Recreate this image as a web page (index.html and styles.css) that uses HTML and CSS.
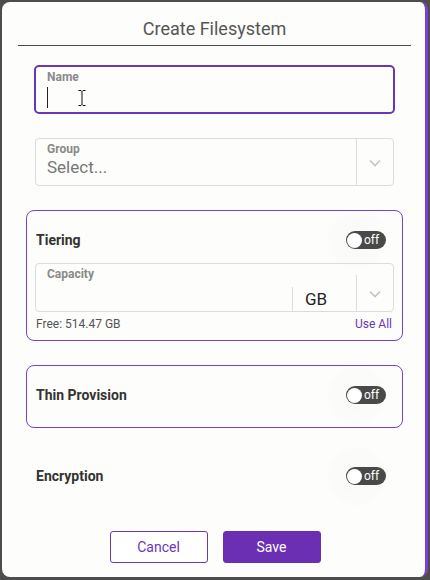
FILE: index.html
```html
<!DOCTYPE html>
<html lang="en">
<head>
<meta charset="utf-8">
<title>Create Filesystem</title>
<link rel="stylesheet" href="styles.css">
</head>
<body>
<div class="dialog">
  <div class="header"><h1 class="title">Create Filesystem</h1></div>

  <div class="form">
    <div class="field field-active">
      <span class="label">Name</span>
      <div class="value-line">
        <span class="caret"></span>
        <svg class="ibeam" width="8" height="16" viewBox="0 0 8 16"><path d="M0.5 0.5h2.5l1 1 1-1h2.5M4 1.5v13M0.5 15.5h2.5l1-1 1 1h2.5" fill="none" stroke="#111" stroke-width="1"/></svg>
      </div>
    </div>

    <div class="select">
      <div class="select-main">
        <span class="label">Group</span>
        <span class="placeholder">Select...</span>
      </div>
      <div class="select-arrow full">
        <svg width="12" height="8" viewBox="0 0 12 8"><path d="M1 1.5l5 5 5-5" fill="none" stroke="#c4c4c4" stroke-width="1.6"/></svg>
      </div>
    </div>

    <div class="card card-tiering">
      <div class="row">
        <span class="row-label">Tiering</span>
        <span class="toggle"><span class="knob"></span><span class="toggle-text">off</span></span>
      </div>
      <div class="select capacity">
        <div class="select-main">
          <span class="label">Capacity</span>
        </div>
        <div class="unit">GB</div>
        <div class="select-arrow partial">
          <svg width="12" height="8" viewBox="0 0 12 8"><path d="M1 1.5l5 5 5-5" fill="none" stroke="#c4c4c4" stroke-width="1.6"/></svg>
        </div>
      </div>
      <div class="free-row">
        <span class="free">Free: 514.47 GB</span>
        <span class="use-all">Use All</span>
      </div>
    </div>

    <div class="card card-thin">
      <div class="row">
        <span class="row-label">Thin Provision</span>
        <span class="toggle"><span class="knob"></span><span class="toggle-text">off</span></span>
      </div>
    </div>

    <div class="plain-row">
      <div class="row">
        <span class="row-label">Encryption</span>
        <span class="toggle"><span class="knob"></span><span class="toggle-text">off</span></span>
      </div>
    </div>
  </div>

  <div class="actions">
    <button class="btn btn-cancel">Cancel</button>
    <button class="btn btn-save">Save</button>
  </div>
</div>
</body>
</html>
```

FILE: styles.css
```css
* { box-sizing: border-box; }

html, body {
  margin: 0;
  padding: 0;
  background: #4d4d4d;
  width: 430px;
  height: 580px;
  overflow: hidden;
}

body {
  font-family: "Roboto", "Liberation Sans", sans-serif;
  padding: 2px 2px 3px 2px;
}

.dialog {
  width: 426px;
  height: 575px;
  background: #fdfdfb;
  border-radius: 8px;
  border-right: 3px solid #7a3fd4;
  display: flex;
  flex-direction: column;
  padding: 0 14px 0 16px;
}

.header {
  margin-top: 15px;
  padding-bottom: 4px;
  border-bottom: 1px solid #4a4a4a;
}

.title {
  margin: 0;
  font-size: 18px;
  line-height: 24px;
  font-weight: 400;
  color: #555;
  text-align: center;
}

.form {
  display: flex;
  flex-direction: column;
  padding: 0 8px;
}

.label {
  font-size: 12px;
  font-weight: 700;
  line-height: 14px;
  color: #8a8a8a;
}

.field {
  margin: 19px 8px 0 8px;
  height: 49px;
  border: 2px solid #6a36b8;
  border-radius: 5px;
  padding: 3px 11px 0 11px;
  display: flex;
  flex-direction: column;
}

.value-line {
  display: flex;
  align-items: center;
  gap: 30px;
  margin-top: 3px;
}

.caret {
  width: 1px;
  height: 21px;
  background: #222;
}

.ibeam { display: block; }

.select {
  margin: 24px 9px 0 9px;
  height: 48px;
  border: 1px solid #dcdcdc;
  border-radius: 4px;
  display: flex;
}

.select-main {
  flex: 1;
  display: flex;
  flex-direction: column;
  padding: 3px 11px 0 11px;
}

.placeholder {
  font-size: 17px;
  line-height: 22px;
  color: #777;
}

.select-arrow {
  width: 37px;
  display: flex;
  align-items: center;
  justify-content: center;
  border-left: 1px solid #dcdcdc;
}

.select-arrow svg { margin-top: 2px; }

.card {
  border: 1px solid #7a3fd4;
  border-radius: 8px;
  padding: 0 8px;
}

.card-tiering {
  margin-top: 24px;
  padding-top: 19px;
  padding-bottom: 8px;
}

.row {
  display: flex;
  align-items: center;
  justify-content: space-between;
  height: 20px;
  padding-right: 8px;
  padding-left: 1px;
}

.row-label {
  font-size: 14px;
  font-weight: 700;
  color: #333;
}

.toggle {
  position: relative;
  width: 40px;
  height: 18px;
  border-radius: 9px;
  background: #4a4a4a;
  display: flex;
  align-items: center;
  padding-left: 1px;
}

.toggle::before {
  content: "";
  position: absolute;
  left: -20px;
  top: -22px;
  width: 62px;
  height: 62px;
  border-radius: 50%;
  background: radial-gradient(circle, rgba(0,0,0,0.014) 0%, rgba(0,0,0,0.008) 60%, rgba(0,0,0,0) 72%);
  pointer-events: none;
}

.knob {
  width: 15px;
  height: 15px;
  border-radius: 50%;
  background: #fff;
  position: relative;
}

.toggle-text {
  font-size: 12px;
  color: #fff;
  margin-left: 2px;
  line-height: 16px;
  position: relative;
}

.capacity {
  margin: 13px 0 0 0;
  height: 49px;
  position: relative;
}

.unit {
  align-self: flex-end;
  height: 24px;
  width: 64px;
  border-left: 1px solid #dcdcdc;
  font-size: 17px;
  color: #222;
  padding-left: 12px;
  display: flex;
  align-items: center;
}

.select-arrow.partial {
  align-self: flex-end;
  height: 36px;
  border-left: 1px solid #dcdcdc;
}

.free-row {
  display: flex;
  justify-content: space-between;
  margin-top: 4px;
  font-size: 12px;
  line-height: 16px;
  padding-left: 1px;
  padding-right: 2px;
}

.free { color: #555; }
.use-all { color: #6a36b8; }

.card-thin {
  margin-top: 24px;
  padding-top: 19px;
  padding-bottom: 22px;
}

.plain-row {
  margin-top: 38px;
  padding: 0 9px;
}

.actions {
  margin-top: 45px;
  display: flex;
  justify-content: center;
  gap: 15px;
  padding-left: 1px;
}

.btn {
  width: 98px;
  height: 32px;
  border-radius: 3px;
  font-family: "Roboto", "Liberation Sans", sans-serif;
  font-size: 14px;
  cursor: pointer;
}

.btn-cancel {
  background: #fff;
  border: 1px solid #6a36b8;
  color: #6a36b8;
}

.btn-save {
  background: #6a2fb2;
  border: 1px solid #6a2fb2;
  color: #fff;
}
```
